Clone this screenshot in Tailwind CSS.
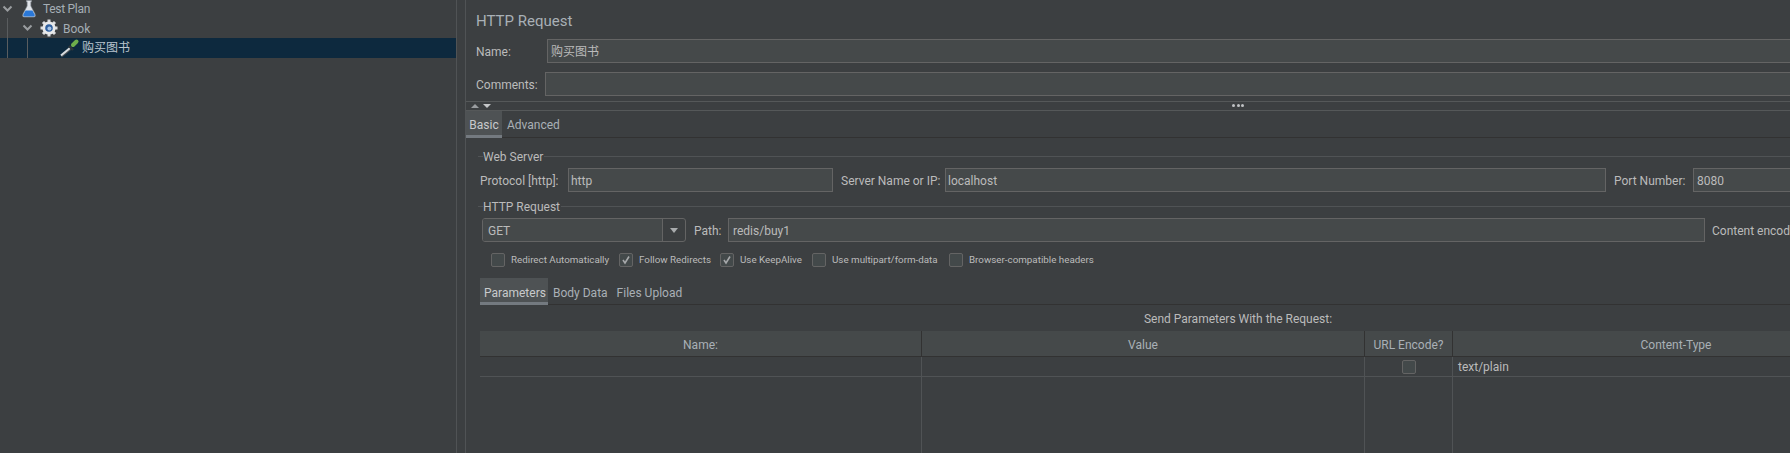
<!DOCTYPE html>
<html lang="en">
<head>
  <meta charset="UTF-8">
  <title>HTTP Request</title>
  <script src="https://cdn.jsdelivr.net/npm/@tailwindcss/browser@4"></script>
</head>
<body class="bg-[#3c3f41] text-[#bbbbbb] overflow-hidden">
<div class="flex h-[453px] w-[1790px] overflow-hidden text-[12px] font-['Roboto','Noto_Sans_CJK_SC',sans-serif]">

  <!-- tree -->
  <div class="w-[456px] shrink-0 relative">
    <div class="flex items-center h-[18px]">
      <svg class="w-[14px] h-[18px] ml-[1px]" viewBox="0 0 14 18"><path d="M2.5 6.5 L6.5 10.5 L10.5 6.5" fill="none" stroke="#9a9da0" stroke-width="2"/></svg>
      <svg class="w-[16px] h-[18px] ml-[6px]" viewBox="0 0 16 18">
        <path d="M5.5 0.5 H10.5 V1.8 H9.8 V6 L14 14 Q15 17 13 17 H3 Q1 17 2 14 L6.2 6 V1.8 H5.5 Z" fill="#dfe3e8" stroke="#8d949c" stroke-width="0.6"/>
        <path d="M4.6 10.5 H11.4 L13.6 14.5 Q14.2 16.4 12.8 16.4 H3.2 Q1.8 16.4 2.4 14.5 Z" fill="#2a78d8"/>
      </svg>
      <span class="ml-[6px] tracking-[-0.3px] text-[#a5aeb5]">Test Plan</span>
    </div>
    <div class="flex items-center h-[20px] pl-[20px]">
      <svg class="w-[14px] h-[18px] ml-[1px]" viewBox="0 0 14 18"><path d="M2.5 6.5 L6.5 10.5 L10.5 6.5" fill="none" stroke="#9a9da0" stroke-width="2"/></svg>
      <svg class="w-[18px] h-[18px] ml-[5px]" viewBox="0 0 18 18">
        <path d="M9 0.5 V17.5 M0.5 9 H17.5 M3 3 L15 15 M15 3 L3 15" stroke="#dcdddf" stroke-width="3"/>
        <circle cx="9" cy="9" r="6.6" fill="#e8e9ea"/>
        <circle cx="9" cy="9" r="3.8" fill="#2f5f9e"/>
        <circle cx="9.4" cy="9.4" r="2" fill="#a7c4e6"/>
      </svg>
      <span class="ml-[5px] pt-[2px] text-[#a5aeb5]">Book</span>
    </div>
    <div class="flex items-center h-[20px] bg-[#0d293e] pl-[60px]">
      <svg class="w-[20px] h-[20px]" viewBox="0 0 20 20">
        <path d="M1.5 19 L10.5 11.5" stroke="#4a4d50" stroke-width="1.2"/>
        <path d="M1 17.5 L10 10" stroke="#d8dbde" stroke-width="2.2"/>
        <path d="M9 8 L13 12" stroke="#30363a" stroke-width="2.4"/>
        <path d="M13 7 L16.5 3.5" stroke="#6fae4b" stroke-width="4" stroke-linecap="round"/>
      </svg>
      <span class="ml-[2px] text-[#bbc6cf]">购买图书</span>
    </div>
    <div class="absolute left-[7px] top-[18px] w-px h-[40px] bg-[#5a5d5f]"></div>
    <div class="absolute left-[27px] top-[38px] w-px h-[20px] bg-[#5a5d5f]"></div>
  </div>

  <!-- splitter -->
  <div class="w-[10px] shrink-0 border-x border-[#505355]"></div>

  <!-- request form -->
  <div class="flex-1 min-w-0 overflow-hidden flex flex-col">
    <div class="h-[39px] flex items-center pl-[10px] pt-[3px] text-[15px] text-[#a9b0b6]">HTTP Request</div>

    <div class="flex items-center h-[24px] pl-[10px]">
      <span class="w-[71px] shrink-0 pt-[2px]">Name:</span>
      <div class="w-[1300px] shrink-0 h-full flex items-center px-[3px] pt-[2px] bg-[#45494a] border border-[#646464]">购买图书</div>
    </div>
    <div class="flex items-center h-[24px] pl-[10px] mt-[9px]">
      <span class="w-[69px] shrink-0 pt-[2px]">Comments:</span>
      <div class="w-[1300px] shrink-0 h-full bg-[#45494a] border border-[#646464]"></div>
    </div>

    <div class="mt-[5px] h-[10px] border-y border-[#555859] flex items-center relative">
      <svg class="ml-[5px] w-[20px] h-[6px]" viewBox="0 0 20 6">
        <path d="M0 5 L4 1 L8 5 Z" fill="#9a9da0"/>
        <path d="M12 1 H20 L16 5 Z" fill="#c5c7c9"/>
      </svg>
      <div class="absolute left-[766px] top-[2px] flex gap-[1.5px]">
        <span class="w-[3px] h-[3px] rounded-full bg-[#c0c2c4]"></span>
        <span class="w-[3px] h-[3px] rounded-full bg-[#c0c2c4]"></span>
        <span class="w-[3px] h-[3px] rounded-full bg-[#c0c2c4]"></span>
      </div>
    </div>

    <div class="flex h-[27px] border-b border-[#323232]">
      <div class="h-[27px] w-[36px] flex items-center justify-center pt-[4px] bg-[#4e5254] border-b-[3px] border-[#747a80] text-[#c8cacc]">Basic</div>
      <div class="h-[26px] flex items-center pl-[5px] pt-[2px] text-[#a9b0b6]">Advanced</div>
    </div>

    <div class="flex items-center h-[20px] mt-[8px] pl-[12px]">
      <div class="w-[5px] h-px bg-[#505355]"></div>
      <span class="mr-[1px] pt-[2px]">Web Server</span>
      <div class="flex-1 h-px bg-[#505355]"></div>
    </div>
    <div class="flex items-center h-[24px] mt-[2px] pl-[14px]">
      <span class="w-[88px] shrink-0 pt-[2px] whitespace-nowrap">Protocol [http]:</span>
      <div class="w-[265px] shrink-0 h-full flex items-center px-[2px] pt-[2px] bg-[#45494a] border border-[#646464]">http</div>
      <span class="ml-[8px] w-[104px] shrink-0 pt-[2px] whitespace-nowrap">Server Name or IP:</span>
      <div class="w-[661px] shrink-0 h-full flex items-center px-[2px] pt-[2px] bg-[#45494a] border border-[#646464]">localhost</div>
      <span class="ml-[8px] w-[79px] shrink-0 pt-[2px] whitespace-nowrap">Port Number:</span>
      <div class="w-[200px] shrink-0 h-full flex items-center px-[3px] pt-[2px] bg-[#45494a] border border-[#646464]">8080</div>
    </div>

    <div class="flex items-center h-[20px] mt-[4px] pl-[12px]">
      <div class="w-[5px] h-px bg-[#505355]"></div>
      <span class="mr-[1px] pt-[2px]">HTTP Request</span>
      <div class="flex-1 h-px bg-[#505355]"></div>
    </div>
    <div class="flex items-center h-[24px] mt-[2px] pl-[16px]">
      <div class="w-[204px] shrink-0 h-full flex bg-[#3c3f41] border border-[#646464] rounded-[3px] overflow-hidden">
        <div class="w-[180px] flex items-center pl-[5px] pt-[2px] bg-[#45494a] border-r border-[#646464]">GET</div>
        <div class="flex-1 flex items-center justify-center"><svg class="w-[8px] h-[5px]" viewBox="0 0 8 5"><path d="M0 0 H8 L4 5 Z" fill="#a8abad"/></svg></div>
      </div>
      <span class="ml-[8px] w-[34px] shrink-0 pt-[2px]">Path:</span>
      <div class="w-[977px] shrink-0 h-full flex items-center px-[4px] pt-[2px] bg-[#45494a] border border-[#646464]">redis/buy1</div>
      <span class="ml-[7px] pt-[2px] whitespace-nowrap">Content encoding:</span>
    </div>

    <div class="flex items-center h-[15px] mt-[10px] pl-[25px] text-[9.8px]">
      <span class="w-[14px] h-[14px] shrink-0 bg-[#43494a] border border-[#646464] rounded-[2px]"></span>
      <span class="ml-[6px] w-[108px] shrink-0 pt-[2px] whitespace-nowrap">Redirect Automatically</span>
      <span class="w-[14px] h-[14px] shrink-0 bg-[#43494a] border border-[#646464] rounded-[2px] flex items-center justify-center"><svg class="w-[10px] h-[10px]" viewBox="0 0 10 10"><path d="M2 5 L4 8 L8 1.5" fill="none" stroke="#a6a8aa" stroke-width="1.6"/></svg></span>
      <span class="ml-[6px] w-[81px] shrink-0 pt-[2px] whitespace-nowrap">Follow Redirects</span>
      <span class="w-[14px] h-[14px] shrink-0 bg-[#43494a] border border-[#646464] rounded-[2px] flex items-center justify-center"><svg class="w-[10px] h-[10px]" viewBox="0 0 10 10"><path d="M2 5 L4 8 L8 1.5" fill="none" stroke="#a6a8aa" stroke-width="1.6"/></svg></span>
      <span class="ml-[6px] w-[72px] shrink-0 pt-[2px] whitespace-nowrap">Use KeepAlive</span>
      <span class="w-[14px] h-[14px] shrink-0 bg-[#43494a] border border-[#646464] rounded-[2px]"></span>
      <span class="ml-[6px] w-[117px] shrink-0 pt-[2px] whitespace-nowrap">Use multipart/form-data</span>
      <span class="w-[14px] h-[14px] shrink-0 bg-[#43494a] border border-[#646464] rounded-[2px]"></span>
      <span class="ml-[6px] pt-[2px] whitespace-nowrap">Browser-compatible headers</span>
    </div>

    <div class="flex h-[27px] mt-[11px] ml-[14px] border-b border-[#323232]">
      <div class="h-[27px] w-[68px] flex items-center justify-center pt-[5px] pl-[2px] bg-[#4e5254] border-b-[3px] border-[#747a80] text-[#c8cacc]">Parameters</div>
      <div class="h-[26px] flex items-center pl-[5px] pt-[3px] text-[#a9b0b6]">Body Data</div>
      <div class="h-[26px] flex items-center pl-[9px] pt-[3px] text-[#a9b0b6]">Files Upload</div>
    </div>

    <div class="h-[26px] w-[1544px] shrink-0 flex items-center justify-center pt-[2px]">Send Parameters With the Request:</div>

    <!-- parameters table -->
    <div class="ml-[14px] w-[1419px] flex-1 flex flex-col">
      <div class="grid grid-cols-[442px_443px_88px_446px] h-[26px] bg-[#45494a] border-b border-[#323232] text-[#a9b0b6]">
        <div class="flex items-center justify-center pt-[2px] border-r border-[#323232]">Name:</div>
        <div class="flex items-center justify-center pt-[2px] border-r border-[#323232]">Value</div>
        <div class="flex items-center justify-center pt-[2px] border-r border-[#323232]">URL Encode?</div>
        <div class="flex items-center justify-center pt-[2px]">Content-Type</div>
      </div>
      <div class="grid grid-cols-[442px_443px_88px_446px] flex-1 grid-rows-[20px_1fr]">
        <div class="border-r border-b border-[#505355]"></div>
        <div class="border-r border-b border-[#505355]"></div>
        <div class="border-r border-b border-[#505355] flex items-center justify-center"><span class="w-[14px] h-[14px] bg-[#43494a] border border-[#646464] rounded-[2px]"></span></div>
        <div class="border-b border-[#505355] flex items-center pl-[5px]">text/plain</div>
        <div class="border-r border-[#505355]"></div>
        <div class="border-r border-[#505355]"></div>
        <div class="border-r border-[#505355]"></div>
        <div></div>
      </div>
    </div>
  </div>
</div>
</body>
</html>
